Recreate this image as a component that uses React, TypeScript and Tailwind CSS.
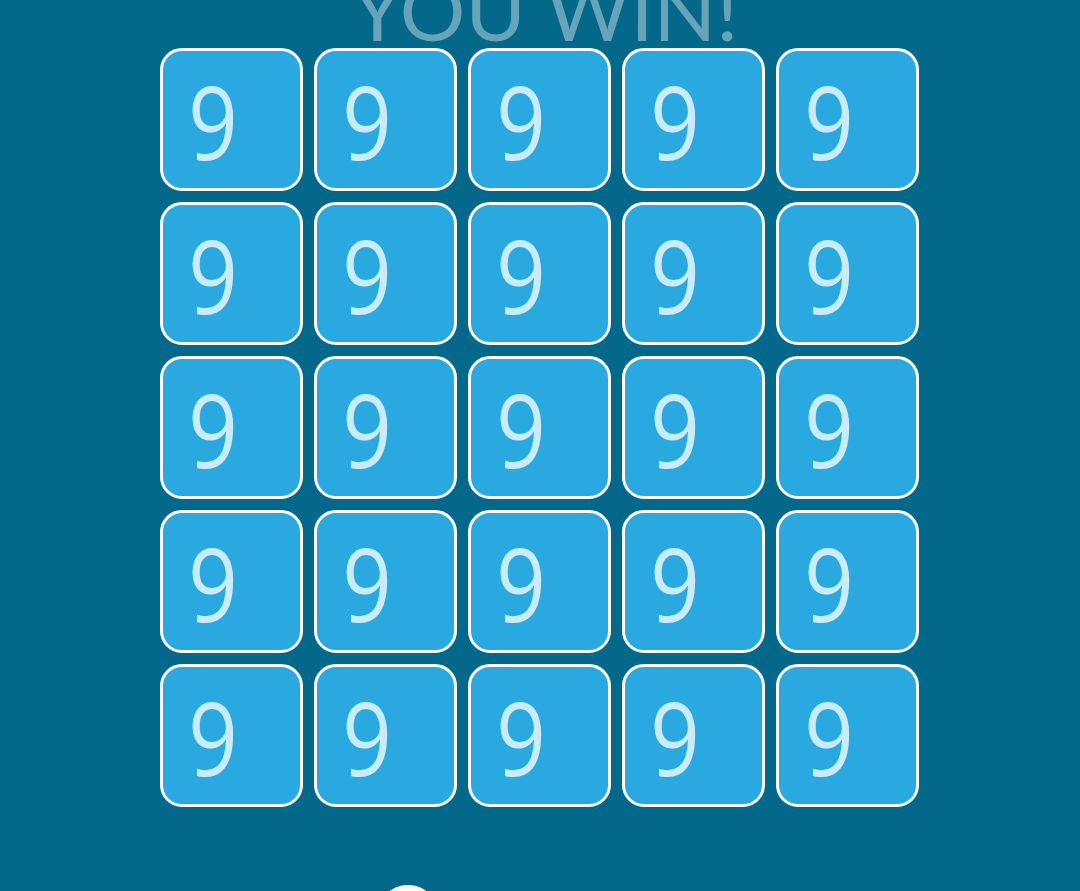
import React from "react";

const tiles = Array.from({ length: 25 }, (_, i) => i);

export default function App() {
  return (
    <div className="h-[891px] w-full overflow-hidden bg-[#03688a] flex flex-col items-center">
      {/* title, partly scrolled off the top */}
      <h1
        className="h-[48px] flex items-end text-[82px] leading-none font-normal text-white/40 whitespace-nowrap ml-[10px]"
        style={{ fontFamily: "Lato, 'Open Sans', sans-serif" }}
      >
        <span className="-mb-[2px]">YOU WIN!</span>
      </h1>

      <div className="grid grid-cols-[repeat(5,143px)] gap-[11px] -ml-[2px]">
        {tiles.map((t) => (
          <div
            key={t}
            className="h-[143px] w-[143px] rounded-[22px] border-[3px] border-white bg-[#2aa9e1] flex items-center pl-[21px] pt-[2px]"
          >
            <span
              className="text-[102px] leading-none font-normal text-[#c9ecfb] scale-x-[0.85]"
              style={{ fontFamily: "'Open Sans', sans-serif" }}
            >
              9
            </span>
          </div>
        ))}
      </div>

      <div className="mt-[78px] -ml-[264px] h-[62px] w-[62px] shrink-0 rounded-full bg-white" />
    </div>
  );
}
